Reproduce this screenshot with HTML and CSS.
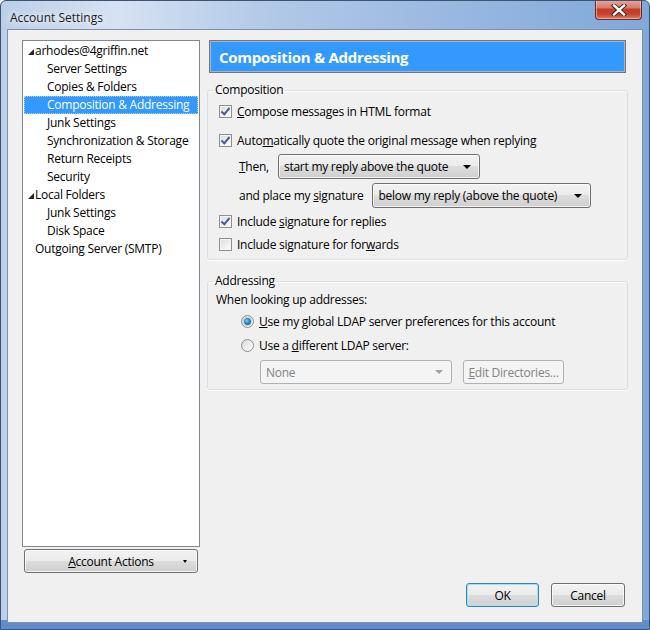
FILE: index.html
```html
<!DOCTYPE html>
<html>

<head>
    <title>Account Settings</title>
    <link rel="stylesheet" href="styles.css">
</head>

<body>
    <div class="window">
        <div class="titlebar">
            <span class="title">Account Settings</span>
            <div class="close-btn">
                <svg width="16" height="12" viewBox="0 0 16 12">
                    <path d="M3 1.5 L13 10.5 M13 1.5 L3 10.5" stroke="#3b1a16" stroke-width="4.2" stroke-linecap="square" />
                    <path d="M3 1.5 L13 10.5 M13 1.5 L3 10.5" stroke="#ffffff" stroke-width="2.4" stroke-linecap="square" />
                </svg>
            </div>
        </div>

        <div class="client">
            <div class="main">
                <!-- account tree -->
                <div class="sidebar">
                    <ul class="tree">
                        <li class="node top"><span class="twisty"></span>arhodes@4griffin.net</li>
                        <li class="node child">Server Settings</li>
                        <li class="node child">Copies &amp; Folders</li>
                        <li class="node child selected">Composition &amp; Addressing</li>
                        <li class="node child">Junk Settings</li>
                        <li class="node child">Synchronization &amp; Storage</li>
                        <li class="node child">Return Receipts</li>
                        <li class="node child">Security</li>
                        <li class="node top"><span class="twisty"></span>Local Folders</li>
                        <li class="node child">Junk Settings</li>
                        <li class="node child">Disk Space</li>
                        <li class="node top">Outgoing Server (SMTP)</li>
                    </ul>
                    <button class="btn actions-btn">
                        <span><u>A</u>ccount Actions</span>
                        <span class="arrow small"></span>
                    </button>
                </div>

                <!-- settings pane -->
                <div class="pane">
                    <div class="pane-header">Composition &amp; Addressing</div>

                    <fieldset class="group composition">
                        <legend>Composition</legend>
                        <div class="row check-row first">
                            <span class="checkbox checked"></span>
                            <span><u>C</u>ompose messages in HTML format</span>
                        </div>
                        <div class="row check-row quote-row">
                            <span class="checkbox checked"></span>
                            <span>Auto<u>m</u>atically quote the original message when replying</span>
                        </div>
                        <div class="row indent-row then-row">
                            <span><u>T</u>hen,</span>
                            <div class="select then-select">
                                <span>start my reply above the quote</span>
                                <span class="arrow"></span>
                            </div>
                        </div>
                        <div class="row indent-row sig-row">
                            <span>and place my <u>s</u>ignature</span>
                            <div class="select sig-select">
                                <span>below my reply (above the quote)</span>
                                <span class="arrow"></span>
                            </div>
                        </div>
                        <div class="row check-row replies-row">
                            <span class="checkbox checked"></span>
                            <span>Include <u>s</u>ignature for replies</span>
                        </div>
                        <div class="row check-row forwards-row">
                            <span class="checkbox"></span>
                            <span>Include signature for for<u>w</u>ards</span>
                        </div>
                    </fieldset>

                    <fieldset class="group addressing">
                        <legend>Addressing</legend>
                        <div class="row lookup-row">When looking up addresses:</div>
                        <div class="row radio-row global-row">
                            <span class="radio checked"></span>
                            <span><u>U</u>se my global LDAP server preferences for this account</span>
                        </div>
                        <div class="row radio-row different-row">
                            <span class="radio"></span>
                            <span>Use a <u>d</u>ifferent LDAP server:</span>
                        </div>
                        <div class="row ldap-row">
                            <div class="select disabled ldap-select">
                                <span>None</span>
                                <span class="arrow"></span>
                            </div>
                            <button class="btn disabled edit-btn"><u>E</u>dit Directories...</button>
                        </div>
                    </fieldset>
                </div>
            </div>

            <div class="footer">
                <button class="btn default ok-btn">OK</button>
                <button class="btn cancel-btn">Cancel</button>
            </div>
        </div>
    </div>
</body>

</html>
```

FILE: styles.css
```css
/* Win7 style dialog */
* {
    margin: 0;
    padding: 0;
    box-sizing: border-box;
}

body {
    font-family: "Segoe UI", "Open Sans", "Liberation Sans", sans-serif;
    font-size: 12px;
    letter-spacing: -0.25px;
    color: #000;
    background: #fff;
}

.window {
    width: 650px;
    height: 630px;
    border: 1px solid #3e5272;
    border-radius: 6px 6px 0 0;
    background: linear-gradient(to right, #bccfe8 0%, #d6e2f1 18%, #b3cae8 40%, #9dbbe2 65%, #80a8d9 100%);
    box-shadow: inset 0 -9px 0 #5f8ccb;
    overflow: hidden;
}

.titlebar {
    height: 28px;
    display: flex;
    align-items: center;
    justify-content: space-between;
    padding-left: 9px;
    padding-right: 7px;
}

.title {
    color: #1b1b1b;
    font-size: 12px;
    letter-spacing: 0;
    margin-top: 4px;
    text-shadow: 0 0 6px #fff, 0 0 10px rgba(255, 255, 255, 0.8);
}

.close-btn {
    align-self: flex-start;
    width: 47px;
    height: 20px;
    margin-top: -1px;
    border: 1px solid #6b2a22;
    border-top: none;
    border-radius: 0 0 4px 4px;
    background: linear-gradient(#e9aa9f 0%, #d67b6c 40%, #c03a28 50%, #c4452f 75%, #e07d5f 100%);
    box-shadow: inset 0 0 0 1px rgba(255, 220, 210, 0.5);
    display: flex;
    align-items: center;
    justify-content: center;
}

.client {
    margin-left: 6px;
    width: 636px;
    height: 594px;
    border: 1px solid #7f90a8;
    background: #f0f0f0;
    padding: 10px 14px 0 14px;
}

.main {
    display: flex;
    gap: 7px;
    height: 533px;
}

/* ---- tree ---- */
.sidebar {
    width: 178px;
    display: flex;
    flex-direction: column;
    gap: 2px;
}

.tree {
    list-style: none;
    height: 507px;
    border: 1px solid #828790;
    background: #fff;
    padding-top: 1px;
}

.node {
    height: 18px;
    line-height: 18px;
    margin: 0 1px;
    white-space: nowrap;
    display: flex;
    align-items: center;
    border: 1px solid transparent;
}

.node.top {
    padding-left: 10px;
    position: relative;
}

.node.child {
    padding-left: 22px;
}

.node.selected {
    background: #3399ff;
    color: #fff;
    border: 1px dotted #a9cdf5;
}

.twisty {
    position: absolute;
    left: 3px;
    top: 6px;
    width: 0;
    height: 0;
    border-left: 6px solid transparent;
    border-bottom: 6px solid #262626;
}

/* ---- buttons ---- */
.btn {
    font: inherit;
    letter-spacing: inherit;
    color: #000;
    height: 24px;
    border: 1px solid #707070;
    border-radius: 3px;
    background: linear-gradient(#f2f2f2 0%, #ebebeb 50%, #dddddd 50%, #cfcfcf 100%);
    box-shadow: inset 0 0 0 1px rgba(255, 255, 255, 0.7);
}

.actions-btn {
    margin: 0 2px;
    display: flex;
    align-items: center;
    justify-content: center;
    position: relative;
}

.actions-btn .arrow {
    position: absolute;
    right: 10px;
    top: 10px;
}

.btn.default {
    border-color: #3c7fb1;
    box-shadow: inset 0 0 0 1px #a6e1f7, inset 0 0 2px 1px #c8eefc;
}

.btn.disabled {
    color: #838383;
    border-color: #adb2b5;
    background: #f4f4f4;
    box-shadow: none;
}

.arrow {
    width: 0;
    height: 0;
    border-left: 4px solid transparent;
    border-right: 4px solid transparent;
    border-top: 4px solid #000;
}

.arrow.small {
    border-left-width: 2px;
    border-right-width: 2px;
    border-top-width: 3px;
}

/* ---- pane ---- */
.pane {
    width: 421px;
}

.pane-header {
    margin: 0 2px;
    height: 33px;
    border: 1px solid #767676;
    box-shadow: inset 0 0 0 1px #a9b4c0;
    background: #3399ff;
    color: #fff;
    font-weight: bold;
    font-size: 15px;
    letter-spacing: -0.3px;
    padding-left: 9px;
    display: flex;
    align-items: center;
}

.group {
    border: 1px solid #d5dfe5;
    border-radius: 3px;
    min-width: 0;
    box-shadow: 0 1px 0 #fff, inset 0 1px 0 #fff;
}

.group legend {
    padding: 0 2px;
    line-height: 16px;
}

.composition {
    margin-top: 9px;
    padding: 5px 10px 7px 11px;
}

.composition legend {
    margin-left: -6px;
}

.addressing {
    margin-top: 13px;
    padding: 2px 10px 5px 8px;
}

.addressing legend {
    margin-left: -3px;
}

.row {
    display: flex;
    align-items: center;
    white-space: nowrap;
}

.check-row {
    height: 16px;
    gap: 5px;
}

.quote-row { margin-top: 13px; }
.replies-row { margin-top: 5px; }
.forwards-row { margin-top: 7px; }

.indent-row {
    padding-left: 20px;
    gap: 9px;
}

.then-row { margin-top: 6px; }
.sig-row { margin-top: 4px; }

.lookup-row { height: 16px; }

.radio-row {
    height: 16px;
    padding-left: 25px;
    gap: 5px;
}

.global-row { margin-top: 6px; }
.different-row { margin-top: 8px; }

.ldap-row {
    margin-top: 7px;
    padding-left: 44px;
    gap: 11px;
}

/* ---- combo boxes ---- */
.select {
    height: 25px;
    border: 1px solid #707070;
    border-radius: 3px;
    background: linear-gradient(#f2f2f2 0%, #ebebeb 50%, #dddddd 50%, #cfcfcf 100%);
    box-shadow: inset 0 0 0 1px rgba(255, 255, 255, 0.7);
    display: flex;
    align-items: center;
    justify-content: space-between;
    padding: 0 8px 0 5px;
}

.then-select { width: 202px; }
.sig-select { width: 219px; }

.select.disabled {
    height: 24px;
    width: 192px;
    color: #838383;
    border-color: #adb2b5;
    background: #f4f4f4;
    box-shadow: none;
}

.select.disabled .arrow {
    border-top-color: #a0a0a0;
}

.edit-btn {
    width: 101px;
}

/* ---- check boxes and radios ---- */
.checkbox {
    width: 13px;
    height: 13px;
    flex: none;
    border: 1px solid #8e8f8f;
    background: linear-gradient(135deg, #d9dbdd 0%, #f0f0f0 60%, #fcfcfc 100%);
    box-shadow: inset 0 0 0 1px #f4f4f4;
    position: relative;
}

.checkbox.checked::after {
    content: "";
    position: absolute;
    left: 3px;
    top: 0px;
    width: 3px;
    height: 7px;
    border-right: 2px solid #4a5f8e;
    border-bottom: 2px solid #4a5f8e;
    transform: rotate(40deg);
}

.radio {
    width: 13px;
    height: 13px;
    flex: none;
    border-radius: 50%;
    border: 1px solid #8e8f8f;
    background: linear-gradient(135deg, #d5d7d9 0%, #eeeeee 55%, #fdfdfd 100%);
    position: relative;
}

.radio.checked::after {
    content: "";
    position: absolute;
    left: 2px;
    top: 2px;
    width: 7px;
    height: 7px;
    border-radius: 50%;
    background: radial-gradient(circle at 40% 40%, #7fd0f4 0%, #2a86c0 45%, #194f84 100%);
    box-shadow: 0 0 0 1px #b9cfe3;
}

/* ---- footer ---- */
.footer {
    margin-top: 10px;
    display: flex;
    justify-content: flex-end;
    gap: 12px;
    padding-right: 3px;
}

.ok-btn { width: 73px; }
.cancel-btn { width: 74px; }
```
